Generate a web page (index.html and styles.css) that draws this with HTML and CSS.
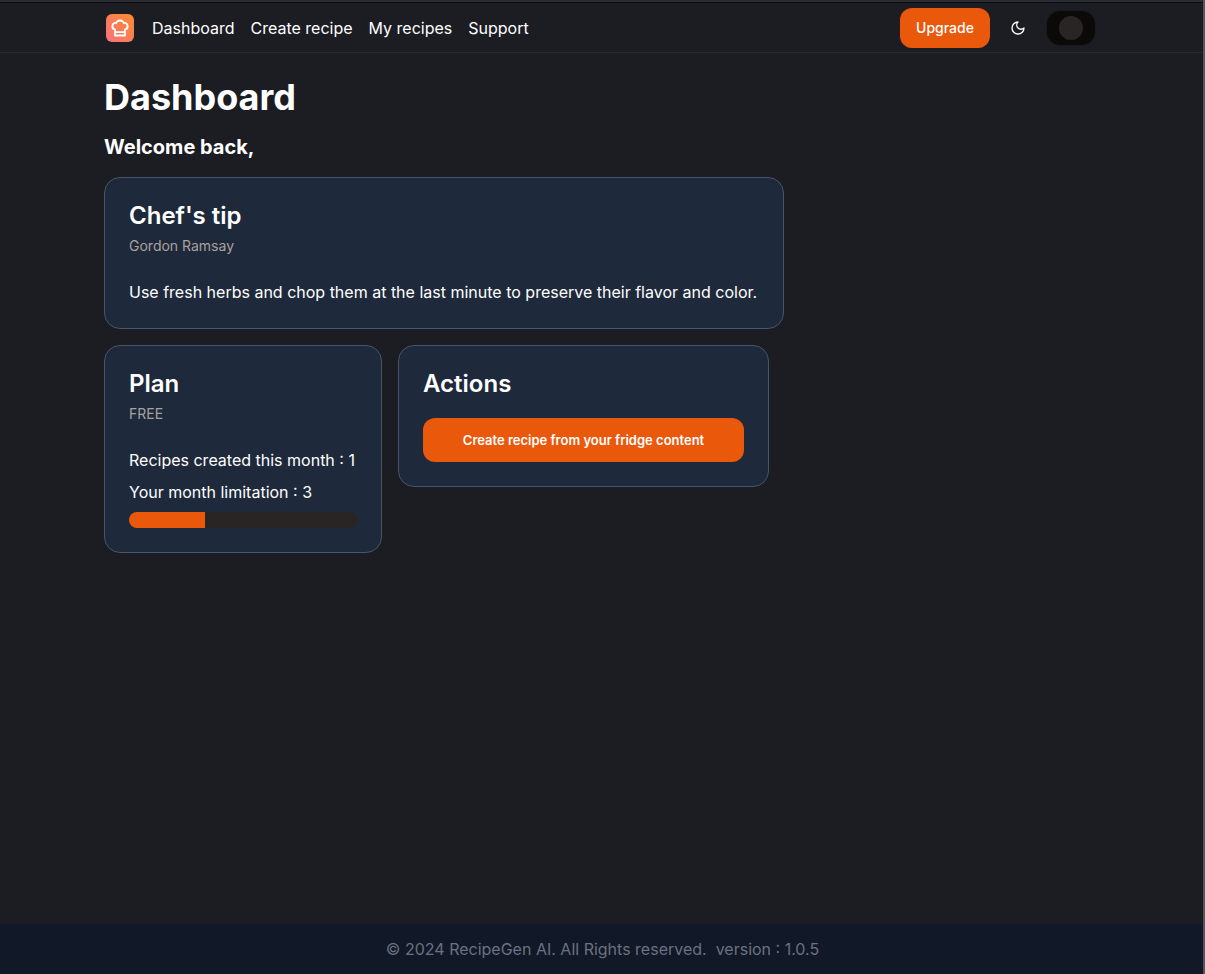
FILE: index.html
```html
<!DOCTYPE html>
<html lang="en">
<head>
<meta charset="utf-8">
<title>Dashboard</title>
<link rel="stylesheet" href="styles.css">
</head>
<body>
<div class="page">
  <div class="chrome-top"></div>
  <header class="navbar">
    <div class="nav-left">
      <span class="logo">
        <svg width="20" height="20" viewBox="0 0 24 24" fill="none" stroke="#fff" stroke-width="2.2" stroke-linecap="round" stroke-linejoin="round"><path d="M6 13.87A4 4 0 0 1 7.41 6a5.11 5.11 0 0 1 1.05-1.54 5 5 0 0 1 7.08 0A5.11 5.11 0 0 1 16.59 6 4 4 0 0 1 18 13.87V21H6Z"/><line x1="6" y1="17" x2="18" y2="17"/></svg>
      </span>
      <nav class="nav-links">
        <a>Dashboard</a>
        <a>Create recipe</a>
        <a>My recipes</a>
        <a>Support</a>
      </nav>
    </div>
    <div class="nav-right">
      <button class="upgrade">Upgrade</button>
      <span class="moon">
        <svg width="16" height="16" viewBox="0 0 24 24" fill="none" stroke="#fff" stroke-width="2" stroke-linecap="round" stroke-linejoin="round"><path d="M12 3a6 6 0 0 0 9 9 9 9 0 1 1-9-9Z"/></svg>
      </span>
      <span class="avatar-pill"><span class="avatar-dot"></span></span>
    </div>
  </header>
  <main class="content">
    <h1 class="title">Dashboard</h1>
    <h2 class="welcome">Welcome back,</h2>
    <section class="card tip-card">
      <h3 class="card-title">Chef's tip</h3>
      <p class="card-sub">Gordon Ramsay</p>
      <p class="card-text">Use fresh herbs and chop them at the last minute to preserve their flavor and color.</p>
    </section>
    <div class="card-row">
      <section class="card plan-card">
        <h3 class="card-title">Plan</h3>
        <p class="card-sub">FREE</p>
        <p class="card-text">Recipes created this month : 1</p>
        <p class="card-text limit">Your month limitation : 3</p>
        <div class="progress"><div class="progress-fill" style="width:33.3%"></div></div>
      </section>
      <section class="card actions-card">
        <h3 class="card-title">Actions</h3>
        <button class="action-btn">Create recipe from your fridge content</button>
      </section>
    </div>
  </main>
  <footer class="footer">© 2024 RecipeGen AI. All Rights reserved.&nbsp; version : 1.0.5</footer>
  <div class="chrome-right"></div>
</div>
</body>
</html>
```
FILE: styles.css
```css
* { box-sizing: border-box; }
html, body { margin: 0; height: 100%; }
body {
  background: #1c1c23;
  color: #fff;
  font-family: Inter, "Liberation Sans", sans-serif;
  font-size: 16px;
  line-height: 24px;
  overflow: hidden;
}
.page {
  position: relative;
  height: 974px;
  display: flex;
  flex-direction: column;
}
.chrome-top {
  height: 3px;
  flex: none;
  background: #2b2b31;
  border-bottom: 1px solid #0c0c0f;
}
.chrome-right {
  position: absolute;
  top: 0;
  right: 0;
  bottom: 0;
  width: 2px;
  background: #55555a;
}
.navbar {
  flex: none;
  height: 50px;
  padding: 0 109px 0 106px;
  display: flex;
  align-items: center;
  justify-content: space-between;
  border-bottom: 1px solid #26262c;
}
.nav-left, .nav-right { display: flex; align-items: center; }
.logo {
  width: 28px;
  height: 28px;
  border-radius: 6px;
  background: linear-gradient(45deg, #f8717f, #fb8c2c);
  display: flex;
  align-items: center;
  justify-content: center;
}
.nav-links { display: flex; gap: 16px; margin-left: 18px; }
.nav-links a { color: #fff; }
.upgrade {
  width: 90px;
  height: 40px;
  border: 0;
  border-radius: 12px;
  background: #ea580c;
  color: #fff;
  font: 500 14px/20px Inter, sans-serif;
}
.moon { display: flex; margin-left: 20px; }
.avatar-pill {
  width: 50px;
  height: 36px;
  margin-left: 20px;
  border-radius: 14px;
  background: #0c0a09;
  border: 1px solid #1a1a1c;
  display: flex;
  align-items: center;
  justify-content: center;
}
.avatar-dot { width: 24px; height: 24px; border-radius: 50%; background: #292524; }
.content { flex: 1; padding: 0 0 0 104px; }
.title { margin: 24px 0 0; font-size: 36px; line-height: 40px; font-weight: 700; }
.welcome { margin: 16px 0 0; font-size: 20px; line-height: 28px; font-weight: 700; }
.card {
  background: #1e293b;
  border: 1px solid #475569;
  border-radius: 16px;
  padding: 24px;
}
.tip-card { width: 680px; margin-top: 16px; }
.card-title { margin: 0; font-size: 24px; line-height: 28px; font-weight: 600; }
.card-sub { margin: 6px 0 0; font-size: 14px; line-height: 20px; color: #a8a29e; }
.card-text { margin: 24px 0 0; }
.card-text.limit { margin-top: 8px; }
.card-row { display: flex; align-items: flex-start; gap: 16px; margin-top: 16px; }
.plan-card { width: 278px; }
.actions-card { width: 371px; }
.progress {
  height: 16px;
  margin-top: 8px;
  border-radius: 8px;
  background: #292524;
  overflow: hidden;
}
.progress-fill { height: 100%; background: #ea580c; }
.action-btn {
  display: block;
  width: 100%;
  height: 44px;
  margin-top: 20px;
  border: 0;
  border-radius: 12px;
  background: #ea580c;
  color: #fff;
  font: 600 13px/20px Inter, sans-serif;
}
.footer {
  flex: none;
  height: 50px;
  background: #111827;
  color: #6b7280;
  display: flex;
  align-items: center;
  justify-content: center;
}
```
